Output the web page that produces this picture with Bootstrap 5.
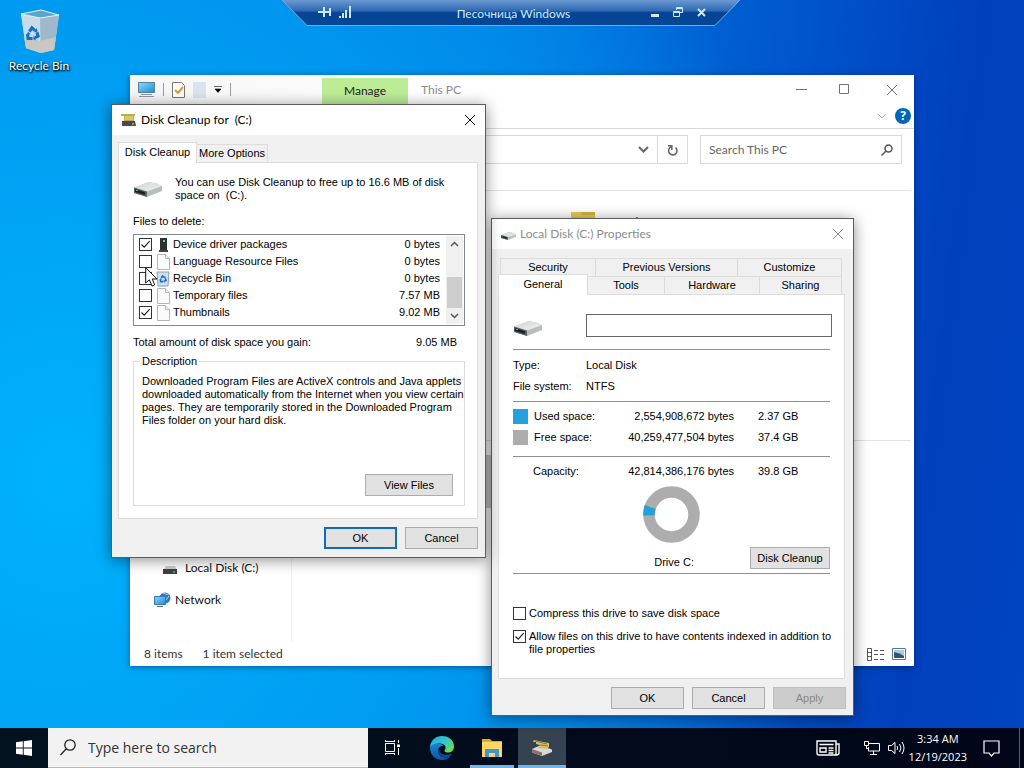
<!DOCTYPE html>
<html lang="en">
<head>
<meta charset="utf-8">
<meta name="viewport" content="width=device-width, initial-scale=1">
<title>Windows Sandbox desktop</title>
<link href="https://cdn.jsdelivr.net/npm/bootstrap@5.3.0/dist/css/bootstrap.min.css" rel="stylesheet">
<style>
  :root { --ui: Lato, "Open Sans", sans-serif; --dlg: "Liberation Sans", Arial, sans-serif; }
  body { font: 12px/16px var(--ui); color: #000; }
  svg { display: block; flex: none; }
  .desktop { min-height: 100vh; overflow: hidden;
    background: radial-gradient(ellipse 75% 110% at 6% 62%, #00b2fc 0, #009cf2 50%, rgba(0,120,224,0) 100%), linear-gradient(97deg, #0088ea 0, #0078e0 48%, #0052cb 74%, #0040bc 88%, #0045c2 100%); }
  .plain { border: 0; background: none; padding: 0; color: inherit; }

  .shortcut { left: 4px; top: 8px; width: 70px; color: #fff; text-decoration: none; text-shadow: 0 1px 2px #000, 1px 1px 2px #000; }
  .session { left: 50%; transform: translateX(-50%); margin-left: -1px; top: 0; width: 458px; height: 26px; color: #c8ecfc; padding: 0 34px 2px 36px; }
  .session > .shape { position: absolute; left: 0; top: 0; }
  .session > :not(.shape) { position: relative; }
  .session .controls { gap: 14px; }

  .win { background: #fff; box-shadow: 0 2px 14px rgba(0,0,0,.45); }
  .explorer { left: 130px; top: 75px; right: 110px; bottom: 102px; box-shadow: 0 1px 6px rgba(0,20,60,.5); color: #222; }
  .explorer .caption { height: 29px; background: linear-gradient(90deg, #f5f5f5, #fff 40%); }
  .manage { width: 86px; height: 26px; background: #bdec96; margin-left: 91px; }
  .place { padding-left: 13px; color: #8c8c8c; }
  .sep { width: 1px; height: 13px; background: #9a9a9a; }
  .ribbon { height: 25px; border-bottom: 1px solid #d9d9d9; }
  .address { height: 61px; padding: 6px 12px 0 0; }
  .field { height: 29px; border: 1px solid #d9d9d9; background: #fff; }
  .field input { font: 12px/16px var(--ui); color: #666; width: 120px; }
  .field input::placeholder { color: #666; opacity: 1; }
  .reload { width: 30px; border-left: 0; }
  .find { width: 202px; margin-left: 12px; }
  .help { width: 16px; height: 16px; border-radius: 50%; background: #0067b8; color: #fff; font: bold 12px/16px "Open Sans", sans-serif; }
  .navpane { width: 162px; border-right: 1px solid #f0f0f0; padding-bottom: 34px; }
  .navpane a { color: #111; text-decoration: none; padding-left: 24px; }
  .navpane .sub { padding-left: 33px; }
  .files { border-top: 1px solid #e3e3e3; margin-right: 3px; padding-top: 21px; }
  .tile { padding-left: 279px; height: 229px; border-bottom: 1px solid #e3e3e3; }
  .tile span { padding: 2px 0 0 20px; }
  .drive { width: 220px; height: 53px; margin-top: 14px; background: #ccc; }
  .status { height: 24px; color: #333; padding: 0 8px 0 14px; gap: 20px; }

  .dialog-win { border: 1px solid #5c5c5c; background: #f0f0f0; font: 11px/13px var(--dlg); color: #000; }
  .dialog-win .caption { height: 30px; background: #fff; font: 12px/16px var(--ui); padding: 0 9px; }
  .cleanup { left: 111px; top: 104px; width: 375px; }
  .props { left: 491px; top: 218px; width: 363px; }
  .props .caption { color: #8c8c8c; }
  .pane { background: #fff; border: 1px solid #dcdcdc; }
  .tabs button { background: #f0f0f0; border: 1px solid #dcdcdc; border-bottom: 0; padding: 0; height: 18px; color: #000; }
  .tabs button + button { border-left: 0; }
  .tabs .on { background: #fff; height: 21px; margin-bottom: -1px; position: relative; z-index: 1; padding-bottom: 2px; }
  .back-row { padding: 0 3px 0 2px; }
  .front-row { padding-right: 3px; margin-top: -2px; }
  .btn-win { --bs-btn-font-size: 11px; --bs-btn-line-height: 13px; --bs-btn-padding-x: 0; --bs-btn-padding-y: 0; --bs-btn-bg: #e1e1e1; --bs-btn-border-color: #adadad; --bs-btn-border-radius: 0; --bs-btn-color: #000;
    --bs-btn-disabled-bg: #ccc; --bs-btn-disabled-border-color: #bfbfbf; --bs-btn-disabled-color: #888; --bs-btn-disabled-opacity: 1; width: 73px; height: 22px; }
  .btn-win.primary { border: 2px solid #0f6cb5; }
  .tick { appearance: none; width: 13px; height: 13px; margin: 0; border: 1px solid #333; background: #fff; flex: none; }
  .tick:checked { background: #fff url("data:image/svg+xml,%3Csvg xmlns='http://www.w3.org/2000/svg' viewBox='0 0 11 11'%3E%3Cpath d='M1.5 5.5 4.2 8.2 9.7 2.2' fill='none' stroke='%23222' stroke-width='1.2'/%3E%3C/svg%3E"); }
  .cleanup .body { padding: 7px 7px 0 6px; }
  .cleanup .pane { padding: 13px 12px 12px 14px; }
  .listing { border: 1px solid #828790; height: 92px; padding: 1px; margin-top: 6px; }
  .listing label { height: 17px; padding: 0 6px 0 4px; }
  .listing label span { padding-left: 2px; }
  .scroll { width: 17px; background: #f0f0f0; height: 88px; padding: 5px 0; }
  .thumb { width: 15px; height: 31px; background: #cdcdcd; margin-top: 24px; }
  .group { border: 1px solid #dcdcdc; margin-top: 6px; padding: 0 11px 9px 8px; }
  .group legend { float: none; width: auto; margin: 0 0 0 -2px; font: 11px/13px var(--dlg); padding: 0 2px; }
  .group p { margin: 7px 0 47px; white-space: nowrap; }
  .foot { padding: 8px 0; gap: 8px; }
  .props .body { padding: 9px 8px 0 6px; }
  .props .pane { padding: 19px 14px 22px; }
  .props .foot { padding: 8px 0 6px; margin-right: -1px; }
  .volume { width: 246px; height: 23px; border: 1px solid #666; padding: 0 4px; margin-right: -2px; }
  .facts { margin: 5px 0 4px; }
  .props hr { margin: 0; border-top: 1px solid #8c9094; opacity: 1; }
  .props table { width: 100%; table-layout: fixed; }
  .props td, .props th { height: 21px; padding: 0; font-weight: 400; vertical-align: middle; }
  .swatch { width: 15px; height: 15px; }
  .choices { display: grid; gap: 10px; margin: 33px -12px 0 0; }
  .choices label { gap: 3px; }

  .taskbar { height: 40px; color: #fff; font: 11px/18px "Open Sans", sans-serif; background: linear-gradient(90deg, #02131e, #020a1c 60%, #010718); }
  .taskbar .cell { width: 48px; height: 40px; }
  .seek { width: 320px; height: 40px; background: #f2f2f2; border-bottom: 1px solid #b8b8b8; padding-left: 12px; gap: 12px; }
  .seek input { font: 14px/20px "Open Sans", sans-serif; color: #333; width: 220px; outline: 0; }
  .seek input::placeholder { color: #333; opacity: 1; }
  .apps { gap: 2px; }
  .running { box-shadow: inset 0 -3px #71b4e8; }
  .front { background: #34434f; }
  .peek { width: 1px; height: 40px; background: #56606e; margin: 0 4px 0 19px; }
  .pointer { left: 145px; top: 267px; z-index: 9; }
</style>
</head>
<body>
<svg width="0" height="0" class="position-absolute">
  <defs>
    <linearGradient id="top" x2="1" y2="1"><stop stop-color="#cfd3d3"/><stop offset="1" stop-color="#f2f2f2"/></linearGradient>
    <linearGradient id="scr" x2="1" y2="1"><stop stop-color="#8ed6fb"/><stop offset="1" stop-color="#1b8ddb"/></linearGradient>
    <symbol id="disk" viewBox="0 0 28 17"><path d="M0 6.500 15 1Q22 2 28 5V10L13 16 0 12Z" fill="#b9bdbd"/><path d="M0 6.500 15 1Q22 2 28 5L13 10.500Z" fill="url(#top)"/><path d="M0 6.500 13 10.500V16L0 12Z" fill="#5c6265"/><path d="M1 8 11 11.200V14L1 11Z" fill="#1d2123"/><path d="M2 9.500h2" stroke="#57a88c"/></symbol>
    <symbol id="page" viewBox="0 0 13 16"><path d="M.5.5h8l4 4v11H.5z" fill="#fbfbfb" stroke="#b5b5b5"/><path d="M8.500.5v4h4" fill="#eee" stroke="#b5b5b5"/></symbol>
    <symbol id="cross" viewBox="0 0 12 12"><path d="M1 1 11 11M11 1 1 11" fill="none" stroke="currentColor"/></symbol>
    <symbol id="arrows" viewBox="0 0 24 24"><g fill="none" stroke-width="5"><path d="M7 9 11 3 16 7"/><path d="M19 10 21 16 16 19"/><path d="M12 20 5 20 4 13"/></g><path d="M14 10l6-1-1-6zM14 15l-1 6 5 2zM2 15l3-6 4 4z" stroke="none"/></symbol>
  </defs>
</svg>

<main class="desktop position-relative d-flex flex-column justify-content-end">
  <a href="#" class="shortcut position-absolute d-flex flex-column align-items-center">
    <svg width="40" height="46" viewBox="0 0 40 46"><path d="M2 6 22 2 40 7 35 42 22 45 7 40Z" fill="#b9cfdc"/><path d="M2 6 21 10 22 45 7 40Z" fill="#c8dce8"/><path d="M21 10 40 7 35 42 22 45Z" fill="#9fb9ca"/><path d="M5 29 21 33 22 45 7 40ZM21 33 37 29 35 42 22 45Z" fill="#c9c6c3"/><path d="M2 6 22 2 40 7 21 10Z" fill="#5aa5cc" stroke="#e1f2fb"/><use href="#arrows" x="6" y="17" width="15" height="17" fill="#1670c4" stroke="#1670c4"/></svg>
    <span class="mt-1">Recycle Bin</span>
  </a>

  <header class="session position-absolute d-flex align-items-center">
    <svg class="shape" width="458" height="26" viewBox="0 0 458 26"><defs><linearGradient id="bar" x2="0" y2="1"><stop stop-color="#6b9ad2"/><stop offset=".42" stop-color="#2e69b3"/><stop offset=".5" stop-color="#064394"/><stop offset="1" stop-color="#064795"/></linearGradient></defs><path d="M0 0H458L433 25.500H25Z" fill="url(#bar)"/><path d="M0 0 25 25.500H433L458 0" fill="none" stroke="#75aade"/></svg>
    <button class="plain" aria-label="Pin"><svg width="13" height="12" viewBox="0 0 13 12"><path d="M0 6H5M6 1V11M6 6H12M12 2V10" fill="none" stroke="currentColor" stroke-width="2"/></svg></button>
    <svg class="ms-2" width="13" height="12" viewBox="0 0 13 12" fill="currentColor"><path d="M0 10h2v2H0zM3 7h2v5H3zM6 4h2v8H6zM10 0h2v12h-2z"/></svg>
    <span class="flex-grow-1 text-center ps-4 pt-1">Песочница Windows</span>
    <div class="controls d-flex">
      <button class="plain" aria-label="Minimize"><svg width="8" height="10"><path d="M0 8.500h8" stroke="currentColor" stroke-width="3"/></svg></button>
      <button class="plain" aria-label="Restore"><svg width="10" height="10" fill="none" stroke="currentColor"><path d="M3.500 3V.5h6v5H7M3 1.500h6M.5 4.500h6v5h-6zM0 5.500h6"/></svg></button>
      <button class="plain" aria-label="Close"><svg width="9" height="9"><path d="M1 1 8 8M8 1 1 8" stroke="currentColor" stroke-width="2"/></svg></button>
    </div>
  </header>

  <section class="win explorer position-absolute d-flex flex-column">
    <div class="caption d-flex align-items-center">
      <svg class="ms-2" width="17" height="16" viewBox="0 0 17 16"><path d="M.5.5h16v10H.5z" fill="url(#scr)" stroke="#55819c"/><path d="M3 12.500h11M1 14.500h15" stroke="#8999a5"/></svg>
      <i class="sep ms-2"></i>
      <svg class="ms-2" width="13" height="16" viewBox="0 0 13 16"><path d="M.5.5h9l3 3v12H.5z" fill="#fff" stroke="#777"/><path d="M3 8 6 11 11 5" fill="none" stroke="#d99836" stroke-width="2"/></svg>
      <svg class="ms-2 me-2" width="13" height="16"><path d="M0 0h13v16H0z" fill="#dbe3ee"/></svg>
      <svg width="8" height="7"><path d="M0 .5h8M1 3h6L4 6.500z" stroke="#000" stroke-width=".6"/></svg>
      <i class="sep ms-2"></i>
      <div class="manage align-self-end d-flex align-items-center justify-content-center">Manage</div>
      <span class="place">This PC</span>
      <div class="ms-auto d-flex gap-4 pe-3 text-secondary">
        <button class="plain me-2" aria-label="Minimize"><svg width="11" height="11"><path d="M0 5.500h11" stroke="currentColor"/></svg></button>
        <button class="plain me-2" aria-label="Maximize"><svg width="11" height="11"><path d="M.5.5h9v9h-9z" fill="none" stroke="currentColor"/></svg></button>
        <button class="plain ms-1" aria-label="Close"><svg width="12" height="12"><use href="#cross"/></svg></button>
      </div>
    </div>
    <div class="ribbon d-flex align-items-center justify-content-end gap-2" style="padding-right:3px">
      <svg width="10" height="6"><path d="M1 1 5 5 9 1" fill="none" stroke="#aaa"/></svg><button class="plain help">?</button>
    </div>
    <div class="address d-flex">
      <div class="field flex-grow-1 d-flex align-items-center justify-content-end">
        <svg class="me-2" width="11" height="7"><path d="M1 1 5.500 5.500 10 1" fill="none" stroke="#666" stroke-width="2"/></svg>
      </div>
      <button class="field reload p-0 d-flex align-items-center justify-content-center" aria-label="Refresh"><svg width="11" height="12" viewBox="0 0 11 12"><path d="M8.500 3.500A4.200 4.200 0 1 1 4 2.900M1 1.800H4.800V6" fill="none" stroke="#666" stroke-width="1.600"/></svg></button>
      <div class="field find d-flex align-items-center px-2"><input class="plain" aria-label="Search This PC" placeholder="Search This PC"><svg class="ms-auto" width="12" height="12" fill="none" stroke="#555" stroke-width="1.500"><circle cx="7.500" cy="4.500" r="3.500"/><path d="M5 7 .5 11.500"/></svg></div>
    </div>
    <div class="flex-grow-1 d-flex">
      <nav class="navpane d-flex flex-column justify-content-end gap-3">
        <a href="#" class="sub d-flex align-items-center"><svg width="14" height="14" viewBox="0 0 14 14" class="me-1"><path d="M1 8 3 5h9l1.500 3z" fill="#ccc"/><path d="M0 8h14v5H0z" fill="#3d4143"/><path d="M10 11h2" stroke="#71e3a0"/></svg><span class="ms-1">Local Disk (C:)</span></a>
        <a href="#" class="d-flex align-items-center"><svg width="17" height="16" viewBox="0 0 17 16" class="me-1"><circle cx="11" cy="6" r="5.500" fill="#3979b2"/><path d="M9 1q3 2 6 1M9 10q4-2 6-6" stroke="#a4d8ef" fill="none"/><path d="M.5 4.500h11v8H.5z" fill="url(#scr)" stroke="#347aaf"/><path d="M3 14.500h6" stroke="#666"/></svg>Network</a>
      </nav>
      <div class="files flex-grow-1">
        <div class="tile d-flex"><svg width="24" height="20"><path d="M0 0h24v20H0z" fill="#e5ca58"/><path d="M0 0h9l3 3h12V0" fill="#d4b33e"/></svg><span>Desktop</span></div>
        <div class="drive"></div>
      </div>
    </div>
    <div class="status d-flex align-items-center">
      <span>8 items</span><span>1 item selected</span>
      <div class="ms-auto d-flex gap-2">
      <svg width="17" height="13" fill="none" stroke="#555"><path d="M.5.5h4v12h-4zM.5 4.500h4M.5 8.500h4"/><path d="M7 2.500h10M7 6.500h10M7 11.500h10" stroke-dasharray="4 2"/></svg>
      <svg width="14" height="12"><path d="M.5.5h13v11H.5z" fill="#fff" stroke="#5e7688"/><path d="M2 2h10v8H2z" fill="#a6cbed"/><path d="M2 4q6 1 10 4v2H2z" fill="#33566c"/></svg>
      </div>
    </div>
  </section>

  <section class="win dialog-win props position-absolute">
    <div class="caption d-flex align-items-center"><svg class="mt-1" width="15" height="10"><use href="#disk"/></svg><span class="ms-1">Local Disk (C:) Properties</span><button class="plain ms-auto" aria-label="Close"><svg width="12" height="12"><use href="#cross"/></svg></button></div>
    <div class="body">
      <div class="tabs">
        <div class="back-row d-flex"><button style="width:96px">Security</button><button style="width:142px">Previous Versions</button><button class="flex-grow-1">Customize</button></div>
        <div class="front-row d-flex align-items-end"><button class="on" style="width:90px">General</button><button style="width:77px">Tools</button><button style="width:95px">Hardware</button><button class="flex-grow-1">Sharing</button></div>
      </div>
      <div class="pane">
        <div class="d-flex justify-content-between align-items-end mb-2 pb-1"><svg width="30" height="17"><use href="#disk"/></svg><input class="volume" aria-label="Volume label"></div>
        <hr>
        <table class="facts"><tr><th style="width:73px">Type:</th><td>Local Disk</td></tr><tr><th>File system:</th><td>NTFS</td></tr></table>
        <hr>
        <table class="mt-1 mb-2"><tr><td style="width:21px"><div class="swatch" style="background:#26a0da"></div></td><td style="width:80px">Used space:</td><td class="text-end" style="width:120px">2,554,908,672 bytes</td><td class="ps-4">2.37 GB</td></tr><tr><td><div class="swatch" style="background:#adadad"></div></td><td>Free space:</td><td class="text-end">40,259,477,504 bytes</td><td class="ps-4">37.4 GB</td></tr></table>
        <hr>
        <table class="my-1"><tr><td style="width:20px"></td><td style="width:81px">Capacity:</td><td class="text-end" style="width:120px">42,814,386,176 bytes</td><td class="ps-4">39.8 GB</td></tr></table>
        <svg class="mx-auto" width="57" height="57" viewBox="0 0 57 57" fill="none" stroke-width="11.500"><circle cx="28.500" cy="28.500" r="22.500" stroke="#adadad"/><path d="M6 29.500A22.500 22.500 0 0 1 7.200 21" stroke="#26a0da"/></svg>
        <div class="d-flex align-items-end justify-content-end mt-1 mb-1"><span class="pe-5 me-2">Drive C:</span><button class="btn btn-win" style="width:80px">Disk Cleanup</button></div>
        <hr>
        <div class="choices">
          <label class="d-flex"><input type="checkbox" class="tick"><span>Compress this drive to save disk space</span></label>
          <label class="d-flex"><input type="checkbox" class="tick" checked><span>Allow files on this drive to have contents indexed in addition to<br>file properties</span></label>
        </div>
      </div>
      <div class="foot d-flex justify-content-end"><button class="btn btn-win">OK</button><button class="btn btn-win">Cancel</button><button class="btn btn-win" disabled>Apply</button></div>
    </div>
  </section>

  <section class="win dialog-win cleanup position-absolute">
    <div class="caption d-flex align-items-center"><svg width="16" height="14" viewBox="0 0 16 14"><path d="M0 1h14v2h-1v5H3V3H0z" fill="#b9ad4d"/><path d="M4 4h8M4 6h8" stroke="#eee39c"/><path d="M1 8h13l1 5H1z" fill="#4a4a4a"/><path d="M11 11h2" stroke="#b7f5d3"/></svg><span class="ms-1" style="white-space:pre">Disk Cleanup for  (C:)</span><button class="plain ms-auto" aria-label="Close"><svg width="12" height="12"><use href="#cross"/></svg></button></div>
    <div class="body">
      <div class="tabs d-flex align-items-end"><button class="on" style="width:79px">Disk Cleanup</button><button style="width:71px">More Options</button></div>
      <div class="pane">
        <div class="d-flex align-items-center"><svg width="30" height="17"><use href="#disk"/></svg><span class="ps-2 ms-1" style="white-space:pre">You can use Disk Cleanup to free up to 16.6 MB of disk
space on  (C:).</span></div>
        <div style="margin-top:13px">Files to delete:</div>
        <div class="listing d-flex">
          <div class="flex-grow-1">
            <label class="d-flex align-items-center"><input type="checkbox" class="tick me-1" checked><svg width="15" height="16"><path d="M4 1h7v12H4z" fill="#293230"/><path d="M3 15h9v-2H3z" fill="#444"/><path d="M7 3h2v2H7z" fill="#54e36a"/></svg><span class="flex-grow-1">Device driver packages</span>0 bytes</label>
            <label class="d-flex align-items-center"><input type="checkbox" class="tick me-1"><svg width="15" height="16"><use href="#page"/></svg><span class="flex-grow-1">Language Resource Files</span>0 bytes</label>
            <label class="d-flex align-items-center"><input type="checkbox" class="tick me-1"><svg width="15" height="16"><path d="M1 1h12l-1 14H2z" fill="#cddfeb" stroke="#8ba0aa"/><use href="#arrows" x="3" y="4" width="8" height="8" fill="#176dc8" stroke="#176dc8"/></svg><span class="flex-grow-1">Recycle Bin</span>0 bytes</label>
            <label class="d-flex align-items-center"><input type="checkbox" class="tick me-1"><svg width="15" height="16"><use href="#page"/></svg><span class="flex-grow-1">Temporary files</span>7.57 MB</label>
            <label class="d-flex align-items-center"><input type="checkbox" class="tick me-1" checked><svg width="15" height="16"><use href="#page"/></svg><span class="flex-grow-1">Thumbnails</span>9.02 MB</label>
          </div>
          <div class="scroll d-flex flex-column align-items-center justify-content-between"><svg width="9" height="6"><path d="M1 5 4.500 1.500 8 5" fill="none" stroke="#555" stroke-width="1.500"/></svg><div class="thumb"></div><svg width="9" height="6"><path d="M1 1 4.500 4.500 8 1" fill="none" stroke="#555" stroke-width="1.500"/></svg></div>
        </div>
        <div class="d-flex justify-content-between pe-2" style="margin-top:10px"><span>Total amount of disk space you gain:</span><span>9.05 MB</span></div>
        <fieldset class="group"><legend>Description</legend>
          <p>Downloaded Program Files are ActiveX controls and Java applets<br>downloaded automatically from the Internet when you view certain<br>pages. They are temporarily stored in the Downloaded Program<br>Files folder on your hard disk.</p>
          <button class="btn btn-win d-block ms-auto" style="width:88px">View Files</button>
        </fieldset>
      </div>
      <div class="foot d-flex justify-content-end"><button class="btn btn-win primary">OK</button><button class="btn btn-win">Cancel</button></div>
    </div>
  </section>

  <svg class="pointer position-absolute" width="13" height="20" viewBox="0 0 13 20"><path d="M.7.8V16L4.300 12.800 7 19 9.700 17.800 7.200 12H12Z" fill="#fff" stroke="#111"/></svg>

  <footer class="taskbar d-flex align-items-center">
    <button class="plain cell d-flex align-items-center justify-content-center" aria-label="Start"><svg width="16" height="16" fill="#fff"><path d="M0 2.200 6.800 1.300V7.500H0zM7.700 1.200 16 0V7.500H7.700zM0 8.400H6.800V14.700L0 13.800zM7.700 8.400H16V16L7.700 14.800z"/></svg></button>
    <div class="seek d-flex align-items-center"><svg width="16" height="17" fill="none" stroke="#222" stroke-width="1.300"><circle cx="10" cy="6" r="5.200"/><path d="M6.300 9.800.5 16"/></svg><input class="plain" aria-label="Type here to search" placeholder="Type here to search"></div>
    <div class="apps d-flex">
      <button class="plain cell d-flex align-items-center justify-content-center" aria-label="Task view"><svg width="16" height="16" fill="none" stroke="#fff"><path d="M1.500 3.500h9v8h-9zM1.500 0v2M10.500 0v2M1.500 1.500h9M1.500 15v-2M10.500 15v-2M1.500 13.500h9M14.500 0v3M14.500 8v7"/><path d="M13 4.500h3v2.500h-3z" fill="#fff" stroke="none"/></svg></button>
      <button class="plain cell d-flex align-items-center justify-content-center" aria-label="Edge"><svg width="24" height="24" viewBox="0 0 24 24"><defs><linearGradient id="e1" x2="1" y2=".7"><stop stop-color="#27a5e8"/><stop offset=".55" stop-color="#31c6cf"/><stop offset="1" stop-color="#68dd55"/></linearGradient><linearGradient id="e2" x2="0" y2="1"><stop stop-color="#1687d4"/><stop offset="1" stop-color="#1452a5"/></linearGradient></defs><path d="M0 12C0 4.500 5.500 0 12 0c7 0 12 4.600 12 10.500 0 4-3 6-6 6-3.500 0-4-1.500-3-3 2-3-1-6-5-6C5 7.500 1 10 0 12z" fill="url(#e1)"/><path d="M0 12c1-3.500 5-5 9-4.500 2 .2 4 1.500 4.500 2.500C10 9.500 8 12 8 15c0 4 4 7 9 6.500l3-.8C18 23 15 24 12 24 5 24 0 18.500 0 12z" fill="url(#e2)"/><path d="M8.500 12.500c-1.500 4.500 2 9 8 9 2.500 0 5-2 6-4-4 2-12 2-13-3z" fill="#10498f"/></svg></button>
      <button class="plain cell d-flex align-items-center justify-content-center" aria-label="File Explorer"><span class="running h-100 d-flex align-items-center px-2 mx-1"><svg class="mx-1" width="20" height="18"><path d="M0 0h8l2 2h10v16H0z" fill="#e5a91c"/><path d="M0 3h20v15H0z" fill="#ffd767"/><path d="M3 18v-7q0-1 1-1h12q1 0 1 1v7h-4v-4H7v4z" fill="#3f95d0"/></svg></span></button>
      <button class="plain cell running front d-flex align-items-center justify-content-center" aria-label="Disk Cleanup"><svg width="22" height="18" viewBox="0 0 22 18"><path d="M1 10 9 6.500 21 10.500V13L11 17 1 13.500z" fill="#d9d9dc"/><path d="M1 10 11 13.500V17L1 13.500z" fill="#8d6f71"/><path d="M3 1 12 3 18 4V8L16 10 7 9 9 6 5 5 5 3 2 3z" fill="#d6bf6c"/><path d="M4 2 16 5M9 6l8 1" stroke="#8d793b"/></svg></button>
    </div>
    <div class="ms-auto d-flex align-items-center">
      <svg width="24" height="16" fill="none" stroke="#fff" stroke-width="1.400"><path d="M1 1h19v14H3q-2 0-2-2zM20 4h3v9q0 2-3 2M3.500 4.500h14M4 8h6v4H4zM12.500 8h5M12.500 10.500h5M12.500 13h5"/></svg>
      <svg class="ms-4" width="16" height="14" fill="none" stroke="#fff"><path d="M5 2.500h10.500v7.500H4.500V6M9.500 10v3M6 13.500h7M.5.5h4v4h-4zM2.500 5v2.500h2"/></svg>
      <svg class="ms-2" width="17" height="14" fill="none" stroke="#fff"><path d="M.5 4.500h3L7 1.500v11L3.500 9.500h-3zM9 5q1.500 2 0 4M11.500 3q3 4 0 8M14 1q4 6 0 12"/></svg>
      <div class="text-center ps-1 pe-2">3:34 AM<br>12/19/2023</div>
      <svg class="ms-2" width="17" height="17" fill="none" stroke="#fff" stroke-width="1.200"><path d="M1 1h15v12h-5L8.500 16 6 13H1z"/></svg>
      <i class="peek"></i>
    </div>
  </footer>
</main>
<script src="https://cdn.jsdelivr.net/npm/bootstrap@5.3.0/dist/js/bootstrap.bundle.min.js"></script>
</body>
</html>
